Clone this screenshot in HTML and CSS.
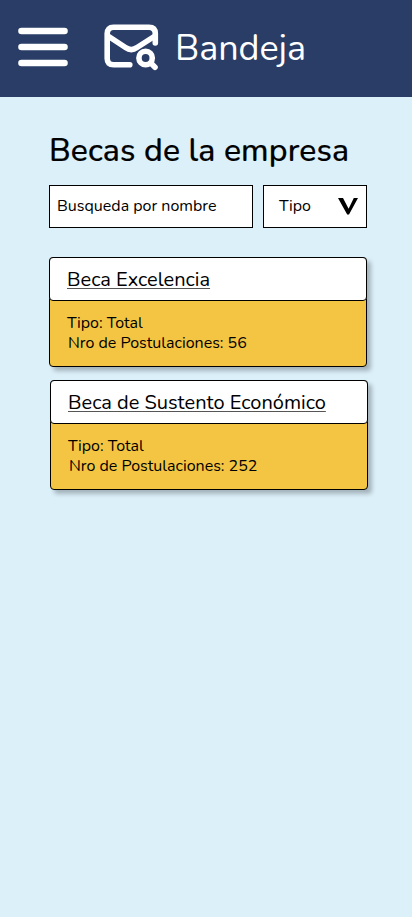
FILE: index.html
```html
<!DOCTYPE html>
<html lang="es">
<head>
<meta charset="utf-8">
<meta name="viewport" content="width=device-width, initial-scale=1">
<title>Bandeja</title>
<link rel="stylesheet" href="styles.css">
</head>
<body>
<header class="topbar">
  <svg class="menu" width="50" height="40" viewBox="0 0 50 40" fill="none" stroke="#fff" stroke-width="6.6" stroke-linecap="round"><path d="M3.5 4H46.5M3.5 20H46.5M3.5 36H46.5"/></svg>
  <svg class="mail" width="56" height="48" viewBox="0 0 56 48" fill="none" stroke="#fff" stroke-width="5.6" stroke-linecap="round" stroke-linejoin="round"><path d="M25.8 41.8H9.5Q3.2 41.8 3.2 35.5V10.6Q3.2 4.3 9.5 4.3H45Q51.3 4.3 51.3 10.6V20"/><path d="M4 13L21.5 24.5Q27.3 28.6 33 24.5L51 13"/><circle cx="41.6" cy="35" r="6.7"/><path d="M46.8 40L51 44.2"/></svg>
  <span class="brand">Bandeja</span>
</header>
<main class="content">
  <h1 class="heading">Becas de la empresa</h1>
  <div class="filters">
    <div class="field search"><span>Busqueda por nombre</span></div>
    <div class="field type"><span>Tipo</span><svg width="20" height="17" viewBox="0 0 20 17"><path d="M0 0H5L10.6 10.8L15.8 0H20L11 16.6H9.2Z"/></svg></div>
  </div>
  <section class="cards">
    <article class="card">
      <h2 class="card-title"><a>Beca Excelencia</a></h2>
      <div class="details"><p>Tipo: Total</p><p>Nro de Postulaciones: 56</p></div>
    </article>
    <article class="card shifted">
      <h2 class="card-title"><a>Beca de Sustento Económico</a></h2>
      <div class="details"><p>Tipo: Total</p><p>Nro de Postulaciones: 252</p></div>
    </article>
  </section>
</main>
</body>
</html>
```
FILE: styles.css
```css
* { box-sizing: border-box; }
body {
  margin: 0;
  min-height: 917px;
  background: #dcf0fa;
  color: #000;
  font: 16px/20px Nunito, Lato, sans-serif;
}
h1, h2, p { margin: 0; font-weight: 400; }
.topbar {
  display: flex;
  height: 97px;
  padding: 0 18px;
  background: #2a3d66;
  color: #fff;
}
.menu { margin-top: 27px; }
.mail { margin: 23px 0 0 36px; }
.brand {
  margin: 23px 0 0 15px;
  font-size: 36px;
  line-height: 51px;
  letter-spacing: -0.1px;
}
.content { padding: 34px 44px 0 49px; }
.heading {
  font-size: 32px;
  line-height: 40px;
  font-weight: 500;
  letter-spacing: 0.1px;
  -webkit-text-stroke: 0.2px #000;
  white-space: nowrap;
}
.filters { display: flex; gap: 10px; margin-top: 14px; }
.field {
  display: flex;
  align-items: center;
  height: 43px;
  padding-bottom: 2px;
  border: 1px solid #000;
  background: #fff;
  white-space: nowrap;
}
.search { width: 204px; padding-left: 7px; }
.type { width: 104px; justify-content: space-between; padding-left: 15px; padding-right: 8px; }
.type svg { margin-top: 1px; }
.cards { display: grid; gap: 13px; margin-top: 29px; }
.card {
  width: 318px;
  height: 110px;
  border: 1px solid #000;
  border-radius: 4px;
  background: #f4c542;
  box-shadow: 4px 4px 4px rgba(0, 0, 0, 0.25);
}
.shifted { margin-left: 1px; }
.card-title {
  height: 44px;
  margin: -1px -1px 0;
  padding: 8px 0 0 17px;
  border: 1px solid #000;
  border-radius: 4px;
  background: #fff;
  font-size: 20px;
  line-height: 28px;
}
.card-title a {
  text-decoration: underline #555;
  text-decoration-thickness: 1px;
  text-underline-offset: 2px;
  text-decoration-skip-ink: none;
}
.details { padding: 12px 17px; }
.details p + p { padding-left: 1px; }
```
